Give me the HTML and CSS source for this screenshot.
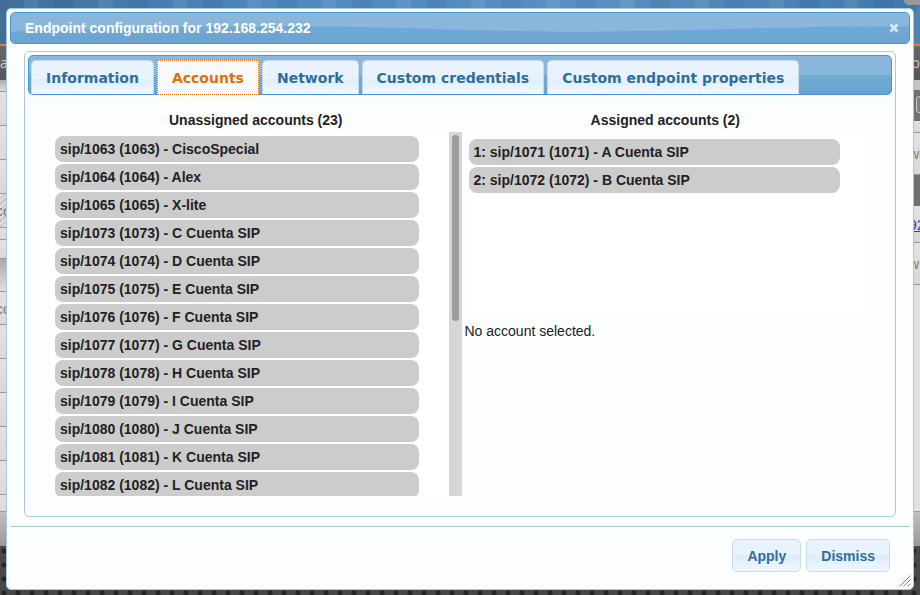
FILE: index.html
```html
<!DOCTYPE html>
<html lang="en">
<head>
<meta charset="utf-8">
<title>Endpoint configuration</title>
<link rel="stylesheet" href="styles.css">
</head>
<body>
<div class="backdrop">
  <div class="banner"><span class="corner"></span></div>
  <div class="menu"><span>a</span><span>o</span></div>
  <div class="sheet">
    <div class="side left">
      <i class="row h12 shade"></i><i class="row h34"></i><i class="row h34"></i><i class="row h34"></i>
      <i class="row h34 hatch">co</i><i class="row h12"></i><i class="row h19"></i><i class="row h33 shade"></i>
      <i class="row h33">co</i><i class="row h34"></i><i class="row h34"></i><i class="row h34"></i><i class="row h34"></i><i class="row h34"></i><i class="row h17"></i><i class="end"></i>
    </div>
    <div class="side right">
      <i class="gap"></i><i class="tool"><b></b></i><i class="row h12"></i><i class="row h42">wi</i><i class="dark"></i>
      <i class="row h37 link">92</i><i class="row h42">w</i><i class="fill"></i><i class="end"></i>
    </div>
  </div>
</div>
<main class="dialog">
  <header class="titlebar">
    <svg class="gloss" viewBox="0 0 900 32" preserveAspectRatio="none" aria-hidden="true"><path d="M0 20C120 14 260 14 340 15S470 20 570 20S760 14 900 14V0H0Z"/></svg>
    <h1>Endpoint configuration for 192.168.254.232</h1>
    <button class="close" aria-label="Close"><svg viewBox="0 0 10 10" width="10" height="10"><path d="M1.5 1.5L8.5 8.5M8.5 1.5L1.5 8.5"/></svg></button>
  </header>
  <section class="panel">
    <nav class="tabs">
      <a href="#">Information</a><a href="#" class="active">Accounts</a><a href="#">Network</a><a href="#">Custom credentials</a><a href="#">Custom endpoint properties</a>
    </nav>
    <div class="columns">
      <section class="unassigned">
        <h2>Unassigned accounts (23)</h2>
        <div class="scroller">
          <ul>
            <li>sip/1063 (1063) - CiscoSpecial</li><li>sip/1064 (1064) - Alex</li><li>sip/1065 (1065) - X-lite</li>
            <li>sip/1073 (1073) - C Cuenta SIP</li><li>sip/1074 (1074) - D Cuenta SIP</li><li>sip/1075 (1075) - E Cuenta SIP</li>
            <li>sip/1076 (1076) - F Cuenta SIP</li><li>sip/1077 (1077) - G Cuenta SIP</li><li>sip/1078 (1078) - H Cuenta SIP</li>
            <li>sip/1079 (1079) - I Cuenta SIP</li><li>sip/1080 (1080) - J Cuenta SIP</li><li>sip/1081 (1081) - K Cuenta SIP</li>
            <li>sip/1082 (1082) - L Cuenta SIP</li>
          </ul>
          <div class="track"><div class="thumb"></div></div>
        </div>
      </section>
      <section class="assigned">
        <h2>Assigned accounts (2)</h2>
        <ul><li>1: sip/1071 (1071) - A Cuenta SIP</li><li>2: sip/1072 (1072) - B Cuenta SIP</li></ul>
        <p>No account selected.</p>
      </section>
    </div>
  </section>
  <footer class="actions"><button>Apply</button><button>Dismiss</button></footer>
  <svg class="grip" viewBox="0 0 12 12" width="12" height="12" aria-hidden="true"><path d="M0.5 11.5L11.5 0.5M4.5 11.5L11.5 4.5M8.5 11.5L11.5 8.5"/></svg>
</main>
</body>
</html>
```
FILE: styles.css
```css
* { box-sizing: border-box; }
body {
  margin: 0;
  padding: 8px 6px 5px;
  min-height: 100vh;
  display: flex;
  background: #484848;
  color: #222;
  font: 14px/18px "Liberation Sans", Arial, sans-serif;
}
h1, h2, p, ul { margin: 0; padding: 0; font-size: 14px; }
ul { list-style: none; }

.backdrop {
  position: fixed;
  inset: 0;
  z-index: -1;
  overflow: hidden;
  color: #777;
  background: radial-gradient(circle at 4px 4px, #252525 2px, transparent 3px) 0 1px / 14px 14px, #484848;
}
.banner {
  display: flex;
  justify-content: flex-end;
  height: 46px;
  border-bottom: 2px solid #e07848;
  background:
    repeating-linear-gradient(105deg, transparent 0 24px, #ffffff14 24px 38px, transparent 38px 53px, #00305014 53px 72px),
    linear-gradient(90deg, #416e9a, #5088bd 30%, #5a90c0 65%, #4078a8);
}
.corner { width: 16px; height: 5px; border-radius: 0 0 0 5px; background: #999; }
.menu {
  display: flex;
  justify-content: space-between;
  height: 34px;
  padding: 8px 0;
  background: linear-gradient(#686868, #555);
  color: #ccc;
  font-family: "Open Sans", sans-serif;
}
.sheet { display: flex; justify-content: space-between; }
.side { width: 8px; overflow: hidden; background: #ddd; }
.side i { display: block; font-style: normal; }
.row { border-bottom: 1px solid #999; background: linear-gradient(#e2e2e2, #d8d8d8); }
.h12 { height: 12px; }
.h17 { height: 17px; }
.h19 { height: 19px; }
.h33 { height: 33px; padding-top: 8px; }
.h34 { height: 34px; padding-top: 8px; }
.h37 { height: 37px; padding-top: 10px; }
.h42 { height: 42px; padding-top: 12px; }
.left .row { text-indent: -4px; }
.right .row { text-indent: -3px; }
.shade { background: linear-gradient(#aaa, #ddd); }
.hatch { background: repeating-linear-gradient(135deg, #ddd 0 3px, #bbb 3px 4px); }
.gap { height: 10px; background: #c4c4c4; }
.tool { height: 31px; padding: 6px 0 0 4px; background: #707070; }
.tool b { display: block; width: 14px; height: 17px; border: 1px solid #ccc; border-radius: 3px; background: #808080; }
.dark { height: 31px; background: #707070; }
.link { color: #33c; text-decoration: underline; }
.fill { height: 227px; background: #e0e0e0; border-bottom: 1px solid #999; }
.end { height: 34px; background: linear-gradient(#c0c0c0, #999); }

.dialog {
  position: relative;
  flex: 1;
  display: flex;
  flex-direction: column;
  padding: 3px;
  border: 1px solid #a6c9e2;
  border-radius: 5px;
  background: #fcfdfd;
}
.titlebar {
  position: relative;
  display: flex;
  align-items: center;
  justify-content: space-between;
  height: 32px;
  padding: 0 10px 0 14px;
  border: 1px solid #4297d7;
  border-radius: 5px;
  background: linear-gradient(#78afd6, #6aa3cf);
  color: #fff;
  overflow: hidden;
}
.titlebar h1, .close { position: relative; }
.gloss { position: absolute; inset: 0; width: 100%; height: 100%; fill: #89b6db; }
.close { display: flex; padding: 0; border: 0; background: none; }
.close path { stroke: #d8e7f3; stroke-width: 3; }

.panel {
  flex: 1;
  margin: 7px 14px 9px;
  padding: 3px;
  border: 1px solid #a6c9e2;
  border-radius: 5px;
}
.tabs {
  display: flex;
  align-items: flex-end;
  gap: 3px;
  height: 40px;
  padding: 0 2px;
  border: 1px solid #4297d7;
  border-radius: 5px;
  background: linear-gradient(#89b6db 50%, #72abd4 50%, #6aa3cf);
}
.tabs a {
  height: 34px;
  padding: 0 14px;
  border: 1px solid #c5dbec;
  border-bottom: 0;
  border-radius: 5px 5px 0 0;
  background: linear-gradient(#e9f3fd 55%, #dfeffc 55%, #f0f7fe);
  color: #2e6e9e;
  font: bold 14px/34px "DejaVu Sans", sans-serif;
  text-decoration: none;
  white-space: nowrap;
}
.tabs .active {
  height: 35px;
  margin-bottom: -1px;
  border: 1px dotted #e17009;
  border-radius: 0;
  background: #f7f9fb;
  color: #e17009;
}

.columns { display: grid; grid-template-columns: 411fr 408fr; padding: 16px 22px 0; }
h2 { text-align: center; }
.scroller { display: flex; justify-content: space-between; height: 364px; margin-top: 3px; padding-left: 5px; overflow: hidden; background: #fff; }
.scroller ul { flex: 1; padding: 4px 30px 0 0; }
li { height: 26px; margin-bottom: 2px; padding-left: 5px; border-radius: 8px; background: #ccc; font-weight: bold; line-height: 26px; }
.track { width: 13px; padding: 3px; background: #d6d6d6; }
.thumb { height: 186px; border-radius: 4px; background: #9b9d9e; }
.assigned { padding-left: 3px; }
.assigned h2 { padding-right: 4px; }
.assigned ul { height: 185px; margin-top: 3px; padding: 7px 30px 0 4px; background: #fff; }
.assigned p { margin-top: 5px; }

.actions {
  display: flex;
  justify-content: flex-end;
  gap: 5px;
  padding: 12px 20px 14px;
  border-top: 1px solid #a6c9e2;
}
.actions button {
  height: 33px;
  padding: 0 14px;
  border: 1px solid #c5dbec;
  border-radius: 5px;
  background: linear-gradient(#e9f3fd 50%, #dcedfb 50%, #f0f7fe);
  color: #2e6e9e;
  font: bold 14px/18px "Liberation Sans", Arial, sans-serif;
}
.grip { position: absolute; right: 2px; bottom: 2px; fill: none; stroke: #3f93d6; stroke-width: 1; }
```
